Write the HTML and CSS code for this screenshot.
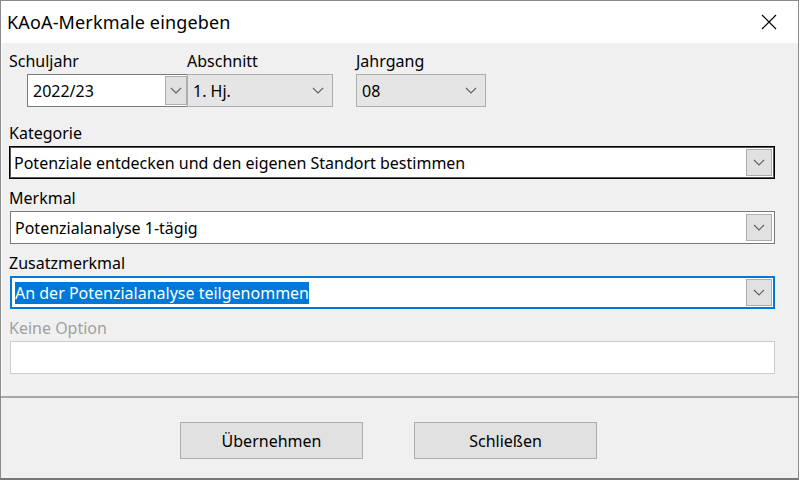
FILE: index.html
```html
<!DOCTYPE html>
<html lang="de">
<head>
<meta charset="utf-8">
<title>KAoA-Merkmale eingeben</title>
<link rel="stylesheet" href="styles.css">
</head>
<body>
<div class="window">
  <div class="titlebar">
    <span class="title">KAoA-Merkmale eingeben</span>
    <span class="close">
      <svg width="16" height="16" viewBox="0 0 16 16"><path d="M1 1 L15 15 M15 1 L1 15" stroke="#000" stroke-width="1.2" fill="none"/></svg>
    </span>
  </div>
  <div class="content">
    <div class="row1">
      <div class="field f-schuljahr">
        <div class="label">Schuljahr</div>
        <div class="combo edit small">
          <span class="value">2022/23</span>
          <span class="dd"><svg width="12" height="7" viewBox="0 0 12 7"><path d="M1 1 L6 6 L11 1" stroke="#606060" stroke-width="1.1" fill="none"/></svg></span>
        </div>
      </div>
      <div class="field f-abschnitt">
        <div class="label">Abschnitt</div>
        <div class="combo list">
          <span class="value">1. Hj.</span>
          <span class="chev"><svg width="12" height="7" viewBox="0 0 12 7"><path d="M1 1 L6 6 L11 1" stroke="#606060" stroke-width="1.1" fill="none"/></svg></span>
        </div>
      </div>
      <div class="field f-jahrgang">
        <div class="label">Jahrgang</div>
        <div class="combo list">
          <span class="value">08</span>
          <span class="chev"><svg width="12" height="7" viewBox="0 0 12 7"><path d="M1 1 L6 6 L11 1" stroke="#606060" stroke-width="1.1" fill="none"/></svg></span>
        </div>
      </div>
    </div>

    <div class="wide">
      <div class="label">Kategorie</div>
      <div class="combo edit big hover">
        <span class="value">Potenziale entdecken und den eigenen Standort bestimmen</span>
        <span class="dd"><svg width="12" height="7" viewBox="0 0 12 7"><path d="M1 1 L6 6 L11 1" stroke="#606060" stroke-width="1.1" fill="none"/></svg></span>
      </div>
    </div>

    <div class="wide">
      <div class="label">Merkmal</div>
      <div class="combo edit big">
        <span class="value">Potenzialanalyse 1-tägig</span>
        <span class="dd"><svg width="12" height="7" viewBox="0 0 12 7"><path d="M1 1 L6 6 L11 1" stroke="#606060" stroke-width="1.1" fill="none"/></svg></span>
      </div>
    </div>

    <div class="wide">
      <div class="label">Zusatzmerkmal</div>
      <div class="combo edit big focus">
        <span class="value"><span class="sel">An der Potenzialanalyse teilgenommen</span></span>
        <span class="dd"><svg width="12" height="7" viewBox="0 0 12 7"><path d="M1 1 L6 6 L11 1" stroke="#606060" stroke-width="1.1" fill="none"/></svg></span>
      </div>
    </div>

    <div class="wide">
      <div class="label disabled">Keine Option</div>
      <div class="textbox disabled"></div>
    </div>
  </div>
  <div class="footer">
    <button class="btn">Übernehmen</button>
    <button class="btn">Schließen</button>
  </div>
</div>
</body>
</html>
```

FILE: styles.css
```css
* { box-sizing: border-box; }
html, body { margin: 0; padding: 0; }
body {
  width: 800px;
  height: 480px;
  background: #ffffff;
  font-family: "Noto Sans", "Open Sans", sans-serif;
  font-size: 16px;
  color: #000;
}
.window {
  width: 799px;
  height: 480px;
  border: 1px solid #8a8a8a;
  border-bottom-width: 2px;
  border-bottom-color: #777;
  background: #f0f0f0;
  display: flex;
  flex-direction: column;
}
.titlebar {
  height: 42px;
  background: #fff;
  display: flex;
  align-items: center;
  justify-content: space-between;
  padding: 0 0 0 6px;
}
.title {
  font-size: 18px;
  letter-spacing: 0.15px;
  margin-top: -1px;
}
.close {
  width: 46px;
  height: 42px;
  display: flex;
  align-items: center;
  justify-content: center;
  margin-right: 6px;
}
.content {
  flex: 1;
  padding: 8px 0 0 7px;
  border-left: 1px solid #fff;
}
.label {
  height: 20px;
  line-height: 20px;
  white-space: nowrap;
}
.label.disabled { color: #a0a0a0; }
.row1 {
  display: flex;
}
.f-schuljahr { width: 178px; }
.f-schuljahr .combo { margin-left: 18px; width: 160px; }
.f-abschnitt { width: 169px; }
.f-abschnitt .combo { width: 146px; }
.f-jahrgang .combo { width: 130px; }
.combo {
  margin-top: 3px;
  height: 33px;
  display: flex;
  align-items: center;
  position: relative;
}
.combo .value {
  flex: 1;
  white-space: nowrap;
  overflow: hidden;
}
.combo.edit {
  background: #fff;
  border: 1px solid #7a7a7a;
  padding: 0 2px 0 4px;
}
.combo.edit.small {
  border-right: none;
  padding-right: 0;
  padding-left: 5px;
}
.combo.list {
  background: #e5e5e5;
  border: 1px solid #adadad;
  padding: 0 8px 0 5px;
}
.chev { display: flex; align-items: center; }
.dd {
  width: 26px;
  height: 27px;
  background: #e1e1e1;
  border: 1px solid #adadad;
  display: flex;
  align-items: center;
  justify-content: center;
}
.combo.small .dd { width: 22px; height: 29px; border-right: 1px solid #adadad; }
.wide { margin-top: 9px; }
.row1 + .wide { margin-top: 16px; }
.combo.big {
  width: 765px;
  margin-left: 1px;
}
.combo.big.hover {
  border-color: #000;
  box-shadow: inset 0 0 0 1px #555;
  margin-left: 0;
  width: 766px;
}
.combo.big.focus {
  border-color: #0078d7;
  box-shadow: inset 0 0 0 1px #0078d7;
  padding-left: 4px;
}
.sel {
  background: #0078d7;
  color: #fff;
  padding: 2px 0 3px;
}
.textbox {
  margin-top: 3px;
  margin-left: 1px;
  width: 765px;
  height: 33px;
  background: #fff;
  border: 1px solid #cccccc;
}
.footer {
  height: 82px;
  border-top: 2px solid #a8a8a8;
  display: flex;
  align-items: flex-start;
  padding: 24px 0 0 179px;
  gap: 51px;
}
.btn {
  width: 183px;
  height: 37px;
  background: #e1e1e1;
  border: 1px solid #adadad;
  font-family: inherit;
  font-size: 16px;
  color: #000;
  padding: 0;
}
```
